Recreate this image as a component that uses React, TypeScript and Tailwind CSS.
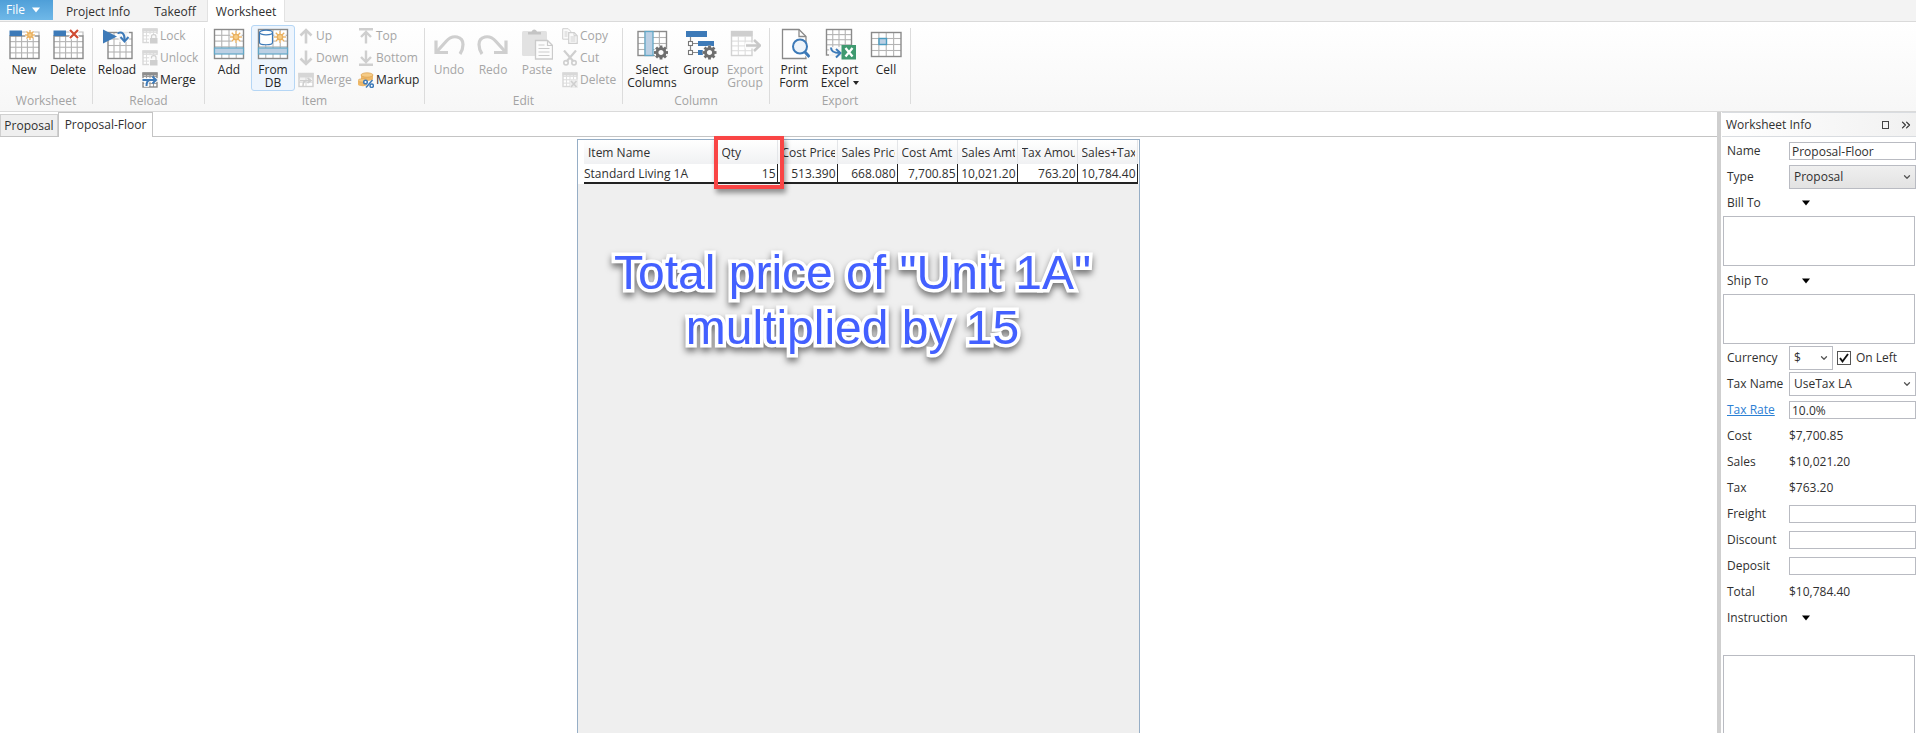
import React, { useState } from 'react';
import { ChevronDown, ChevronsRight } from 'lucide-react';

const BLUE = '#3d7ab8';
const LINE = '#8a8a8a';
const OFF = '#cfcfcf';

// Shared icon parts

function Svg({ size = 32, children }: { size?: number; children: React.ReactNode }) {
  return (
    <svg width={size} height={size} viewBox={`0 0 ${size} ${size}`} fill="none" aria-hidden="true" className="shrink-0">
      {children}
    </svg>
  );
}

function Grid({
  x, y, w, h, cols, rows, stroke = LINE, inner = '#b4b4b4', strokeWidth = 1.4,
}: {
  x: number; y: number; w: number; h: number; cols: number; rows: number;
  stroke?: string; inner?: string; strokeWidth?: number;
}) {
  const cw = w / cols;
  const rh = h / rows;
  return (
    <g>
      <rect x={x} y={y} width={w} height={h} fill="#fff" />
      <g stroke={inner} strokeWidth="1.1">
        {Array.from({ length: cols - 1 }, (_, i) => (
          <path key={`c${i}`} d={`M${x + cw * (i + 1)} ${y}v${h}`} />
        ))}
        {Array.from({ length: rows - 1 }, (_, i) => (
          <path key={`r${i}`} d={`M${x} ${y + rh * (i + 1)}h${w}`} />
        ))}
      </g>
      <rect x={x} y={y} width={w} height={h} stroke={stroke} strokeWidth={strokeWidth} />
    </g>
  );
}

function Star({ cx, cy, r, bg = '#fff' }: { cx: number; cy: number; r: number; bg?: string }) {
  return (
    <g transform={`translate(${cx} ${cy})`} stroke="#e9b060" strokeWidth="1.3">
      <circle r={r} fill={bg} fillOpacity="0.85" stroke="none" />
      {[0, 45, 90, 135].map((a) => (
        <path key={a} d={`M0 ${-r}V${r}`} transform={`rotate(${a})`} />
      ))}
      <circle r={r * 0.45} fill="#f7cd85" />
    </g>
  );
}

function Gear({ cx, cy }: { cx: number; cy: number }) {
  return (
    <g transform={`translate(${cx} ${cy})`}>
      <circle r="7" fill="#fbfbfb" />
      {[0, 45, 90, 135].map((a) => (
        <path key={a} d="M0 -7V7" stroke="#6e6e6e" strokeWidth="2.8" transform={`rotate(${a})`} />
      ))}
      <circle r="4" fill="#fbfbfb" stroke="#6e6e6e" strokeWidth="2.8" />
    </g>
  );
}

// Large ribbon icons

const NewIcon = () => (
  <Svg>
    <path d="M14 4h17v4" stroke="#bdbdbd" strokeWidth="1.2" />
    <Grid x={2} y={8} w={29} h={22.5} cols={5} rows={4} />
    <rect x="1.5" y="2.5" width="12.5" height="5.5" fill={BLUE} />
    <Star cx={22} cy={7} r={5} />
  </Svg>
);

const DeleteIcon = () => (
  <Svg>
    <path d="M14 4h17v4" stroke="#bdbdbd" strokeWidth="1.2" />
    <Grid x={2} y={8} w={29} h={22.5} cols={5} rows={4} />
    <rect x="1.5" y="2.5" width="12.5" height="5.5" fill={BLUE} />
    <path d="M18 2l8 8M26 2l-8 8" stroke="#fff" strokeWidth="4" />
    <path d="M18 2l8 8M26 2l-8 8" stroke="#cf4a32" strokeWidth="2.2" />
  </Svg>
);

const ReloadIcon = () => (
  <Svg>
    <Grid x={7} y={4.5} w={24} h={26} cols={4} rows={4} />
    <path d="M16 1h12v13H18z" fill="#fcfcfc" fillOpacity="0.8" />
    <path d="M2 1.5l14 7-14 7z" fill={BLUE} />
    <path d="M16.5 5.5C21 3 24 6 23.5 12" stroke={BLUE} strokeWidth="2" />
    <path d="M19.500 9l4 4.500 4-4.500" stroke={BLUE} strokeWidth="2" />
  </Svg>
);

const AddIcon = () => (
  <Svg>
    <Grid x={1.5} y={1.5} w={29} h={29} cols={4} rows={5} />
    <rect x="1.5" y="20" width="29" height="6" fill="#bcd0e4" stroke="#62a7c6" strokeWidth="1.2" />
    <Star cx={23} cy={9} r={6} />
  </Svg>
);

const FromDbIcon = () => (
  <Svg>
    <Grid x={1.5} y={1.5} w={29} h={29} cols={4} rows={5} />
    <rect x="1.5" y="20" width="29" height="6" fill="#bcd0e4" stroke="#62a7c6" strokeWidth="1.2" />
    <path d="M2.500 4.500v10c0 3 13 3 13 0v-10" fill="#fff" stroke={BLUE} strokeWidth="1.2" />
    <ellipse cx="9" cy="4.5" rx="6.5" ry="2.3" fill="#fff" stroke={BLUE} strokeWidth="1.2" />
    <Star cx={23} cy={9} r={6} />
  </Svg>
);

const UndoIcon = () => (
  <Svg>
    <path d="M3 12.5v12h12" stroke={OFF} strokeWidth="3.2" />
    <path d="M3.500 24L13 13.500c7-8 17-5 17 3 0 4-1 6.500-3 9.500" stroke={OFF} strokeWidth="3.2" />
  </Svg>
);

const RedoIcon = () => (
  <Svg>
    <path d="M29 12.5v12H17" stroke={OFF} strokeWidth="3.2" />
    <path d="M28.500 24L19 13.500c-7-8-17-5-17 3 0 4 1 6.500 3 9.500" stroke={OFF} strokeWidth="3.2" />
  </Svg>
);

const PasteIcon = () => (
  <Svg>
    <rect x="1" y="3" width="25" height="25" rx="1.5" fill="#e2e2e2" />
    <path d="M7 6.500V4h3.500c.5-3.500 5-3.500 5.500 0H20v2.500z" fill="#c4c4c4" />
    <path d="M14.500 12.500h12l5 5v13.500h-17z" fill="#fcfcfc" stroke="#cbcbcb" strokeWidth="1.3" />
    <path d="M26.500 12.500v5h5M17.500 17h6M17.500 20.500h11M17.500 24h11M17.500 27.500h11" stroke="#cbcbcb" strokeWidth="1.2" />
  </Svg>
);

const SelectColumnsIcon = () => (
  <Svg>
    <Grid x={2} y={3.5} w={28.5} h={24} cols={4} rows={4} />
    <rect x="9" y="3.5" width="8" height="24" fill="#bcd0e4" stroke="#62a7c6" strokeWidth="1.3" />
    <Gear cx={25} cy={24.5} />
  </Svg>
);

const GroupIcon = () => (
  <Svg>
    <rect x="1" y="3" width="21" height="6" fill={BLUE} />
    <path d="M5.500 9v15.500M5.500 15.500H13M5.500 24.500H13" stroke={LINE} strokeWidth="1.2" />
    <rect x="3.5" y="13.5" width="4" height="4" fill="#fff" stroke="#777" strokeWidth="1.1" />
    <rect x="3.5" y="22.5" width="4" height="4" fill="#fff" stroke="#777" strokeWidth="1.1" />
    <rect x="13" y="13" width="16" height="5" fill={BLUE} />
    <rect x="13" y="22" width="6" height="5" fill={BLUE} />
    <Gear cx={24.5} cy={24.5} />
  </Svg>
);

const ExportGroupIcon = () => (
  <Svg>
    <Grid x={2.5} y={3.5} w={20.5} h={24} cols={3} rows={5} stroke="#d2d2d2" inner="#dedede" />
    <rect x="2" y="3" width="21.5" height="5" fill={OFF} />
    <path d="M16 17.500h13" stroke="#fbfbfb" strokeWidth="6" />
    <path d="M17 17.500h13M25 12l6 5.500-6 5.500" stroke="#c8c8c8" strokeWidth="2.6" />
  </Svg>
);

const PrintFormIcon = () => (
  <Svg>
    <path d="M4.500 1.500H21l7 7v22H4.500z" fill="#fff" stroke={LINE} strokeWidth="1.3" />
    <path d="M21 1.500v7h7" stroke={LINE} strokeWidth="1.3" />
    <path d="M26.500 23l5 6" stroke="#fff" strokeWidth="5" />
    <circle cx="22" cy="18.5" r="7" fill="#eef4fa" stroke={BLUE} strokeWidth="2" />
    <path d="M26.500 23.500l5 5.500" stroke={BLUE} strokeWidth="3" />
  </Svg>
);

const ExportExcelIcon = () => (
  <Svg>
    <Grid x={2.5} y={1.5} w={25} h={25.5} cols={4} rows={5} />
    <path d="M5 19h13v11H5z" fill="#fbfbfb" fillOpacity="0.9" />
    <path d="M7 19.500c0 4 3 5.500 8.500 5.500M12 21l4.500 4-4.500 4.500" stroke={BLUE} strokeWidth="2" />
    <rect x="17.5" y="17" width="14.5" height="14.5" fill="#3f9a70" />
    <path d="M21.500 20l7 8.500M28.500 20l-7 8.500" stroke="#fff" strokeWidth="2.3" />
  </Svg>
);

const CellIcon = () => (
  <Svg>
    <Grid x={1.5} y={4.5} w={29.5} h={24} cols={4} rows={4} />
    <rect x="9" y="10.5" width="7.5" height="6" fill="#bcd0e4" stroke="#4b9cc0" strokeWidth="1.4" />
  </Svg>
);

// Small ribbon icons

const SmallTable = ({ children }: { children?: React.ReactNode }) => (
  <Svg size={16}>
    <Grid x={1} y={1} w={14} h={13.5} cols={4} rows={4} stroke="#d8d8d8" inner="#dedede" />
    <rect x="0.5" y="0.5" width="15" height="3" fill="#d8d8d8" />
    {children}
  </Svg>
);

const LockIcon = () => (
  <SmallTable>
    <rect x="7" y="6" width="9" height="10" fill="#fafafa" />
    <rect x="8" y="10" width="7.5" height="5.5" fill={OFF} />
    <path d="M9.500 10V8.500c0-2.500 4.500-2.500 4.500 0V10" stroke={OFF} strokeWidth="1.2" />
  </SmallTable>
);

const UnlockIcon = () => (
  <SmallTable>
    <rect x="7" y="5" width="9" height="11" fill="#fafafa" />
    <rect x="8" y="10" width="7.5" height="5.5" fill={OFF} />
    <path d="M9.500 8.500V7.500c0-2.500 4.500-2.500 4.500 0V10" stroke={OFF} strokeWidth="1.2" />
  </SmallTable>
);

const MergeTableIcon = () => (
  <Svg size={16}>
    <Grid x={1} y={1} w={14} h={14} cols={4} rows={4} inner="#9c9c9c" />
    <rect x="0.5" y="0.5" width="15" height="3" fill="#8d8d8d" />
    <path d="M0 6h16v4H7v5H2v-5H0z" fill="#fff" fillOpacity="0.8" />
    <path d="M0.500 8h13M10.500 4.500l3.500 3.500-3.500 3.500M4.500 14c0-4 1-6 4-6" stroke={BLUE} strokeWidth="2" />
  </Svg>
);

const MergeOffIcon = () => (
  <Svg size={16}>
    <Grid x={1} y={1.5} w={14} h={13} cols={2} rows={3} stroke={OFF} inner="#dadada" />
    <rect x="0.5" y="1" width="15" height="4" fill="#d6d6d6" />
    <path d="M2 8.500h11M9.500 6l3.500 2.500-3.500 2.500M5 14c0-4 1-5.500 4-5.500" stroke={OFF} strokeWidth="1.6" />
  </Svg>
);

const UpIcon = () => (
  <Svg size={16}><path d="M8 15.500V2M2.500 7.500L8 2l5.500 5.500" stroke={OFF} strokeWidth="2.6" /></Svg>
);
const DownIcon = () => (
  <Svg size={16}><path d="M8 .5V14M2.500 8.500L8 14l5.500-5.500" stroke={OFF} strokeWidth="2.6" /></Svg>
);
const TopIcon = () => (
  <Svg size={16}><path d="M1 1.200h14M8 15.500V4M3 9l5-5 5 5" stroke={OFF} strokeWidth="2.4" /></Svg>
);
const BottomIcon = () => (
  <Svg size={16}><path d="M1 14.800h14M8 .5V12M3 7l5 5 5-5" stroke={OFF} strokeWidth="2.4" /></Svg>
);

const MarkupIcon = () => (
  <Svg size={16}>
    <path d="M3 3v4c0 2.500 12 2.500 12 0V3z" fill="#eeb868" />
    <ellipse cx="9" cy="3" rx="6" ry="2.2" fill="#f5cb86" stroke="#dca250" strokeWidth=".7" />
    <path d="M0 9v3.500c0 2 9 2.500 9 0V9z" fill="#eeb868" />
    <ellipse cx="5" cy="8.5" rx="5" ry="1.8" fill="#f5cb86" stroke="#dca250" strokeWidth=".7" />
    <path d="M14.500 8l-6.500 7.500" stroke={BLUE} strokeWidth="1.5" />
    <circle cx="7.5" cy="10" r="1.8" fill="#fff" stroke={BLUE} strokeWidth="1.5" />
    <circle cx="13.7" cy="13.7" r="1.7" fill="#fff" stroke={BLUE} strokeWidth="1.5" />
  </Svg>
);

const CopyIcon = () => (
  <Svg size={16}>
    <path d="M.7 .7h5.500l2.500 2.500v8h-8z" fill="#fbfbfb" stroke={OFF} />
    <path d="M2.500 4h3M2.500 6h3M2.500 8h3" stroke={OFF} />
    <path d="M6.700 4.700h5.500l3 3v7.600h-8.500z" fill="#fbfbfb" stroke={OFF} strokeWidth="1.2" />
    <path d="M12 4.700v3h3M8.500 9h5M8.500 11h5M8.500 13h5" stroke={OFF} />
  </Svg>
);

const CutIcon = () => (
  <Svg size={16}>
    <path d="M2 .5l9.500 11M14 .5L4.500 11.500" stroke={OFF} strokeWidth="2.2" />
    <circle cx="4" cy="12.8" r="2.2" stroke={OFF} strokeWidth="1.6" />
    <circle cx="12" cy="12.8" r="2.2" stroke={OFF} strokeWidth="1.6" />
  </Svg>
);

const DeleteRowIcon = () => (
  <SmallTable>
    <rect x="8" y="7.5" width="8" height="8.5" fill="#ededed" />
    <path d="M9 9l5.500 6M14.500 9L9 15" stroke={OFF} strokeWidth="1.6" />
  </SmallTable>
);

const Caret = () => (
  <svg width="10" height="6" viewBox="0 0 10 6" fill="currentColor" aria-hidden="true"><path d="M1 0.500h8L5 5.500z" /></svg>
);

// Ribbon building blocks

function RibbonGroup({ title, children }: { title: string; children: React.ReactNode }) {
  return (
    <div className="flex">
      <div className="flex flex-col px-0.5 pt-[3px]">
        <div className="flex h-[68px] items-start">{children}</div>
        <div className="text-center leading-4 text-[#a3a3a3]">{title}</div>
      </div>
      <div className="mt-1.5 h-[76px] w-px bg-[#dcdcdc]" />
    </div>
  );
}

function BigButton({
  icon: Icon, lines, disabled = false, active = false, caret = false, width = 'w-11',
}: {
  icon: React.ComponentType; lines: string[];
  disabled?: boolean; active?: boolean; caret?: boolean; width?: string;
}) {
  return (
    <button
      type="button"
      disabled={disabled}
      className={`flex h-[66px] flex-col items-center rounded-[3px] border pt-0.5 leading-[13px] ${width} ${
        active ? 'border-[#b5d6f5] bg-[#eef5fd]' : 'border-transparent'
      } ${disabled ? 'text-[#a6a6a6]' : 'text-[#262626]'}`}
    >
      <Icon />
      <span className="mt-[3px] flex flex-col whitespace-nowrap">
        {lines.map((line, i) => (
          <span key={line} className="flex items-center justify-center gap-1">
            {line}
            {caret && i === lines.length - 1 && (
              <svg width="6" height="4" viewBox="0 0 6 4" fill="currentColor"><path d="M0 0h6L3 4z" /></svg>
            )}
          </span>
        ))}
      </span>
    </button>
  );
}

function SmallButton({ icon: Icon, label, disabled = true }: {
  icon: React.ComponentType; label: string; disabled?: boolean;
}) {
  return (
    <button
      type="button"
      disabled={disabled}
      className={`flex h-[22px] items-center gap-0.5 px-[3px] whitespace-nowrap ${
        disabled ? 'text-[#a6a6a6]' : 'text-[#262626]'
      }`}
    >
      <Icon />
      {label}
    </button>
  );
}

function Ribbon() {
  return (
    <div className="flex h-[90px] border-b border-[#dadada] bg-linear-to-b from-white to-[#f7f7f7]">
      <RibbonGroup title="Worksheet">
        <BigButton icon={NewIcon} lines={['New']} />
        <BigButton icon={DeleteIcon} lines={['Delete']} />
      </RibbonGroup>
      <RibbonGroup title="Reload">
        <BigButton icon={ReloadIcon} lines={['Reload']} />
        <div className="flex w-[63px] flex-col">
          <SmallButton icon={LockIcon} label="Lock" />
          <SmallButton icon={UnlockIcon} label="Unlock" />
          <SmallButton icon={MergeTableIcon} label="Merge" disabled={false} />
        </div>
      </RibbonGroup>
      <RibbonGroup title="Item">
        <BigButton icon={AddIcon} lines={['Add']} />
        <BigButton icon={FromDbIcon} lines={['From', 'DB']} active />
        <div className="flex w-15 flex-col">
          <SmallButton icon={UpIcon} label="Up" />
          <SmallButton icon={DownIcon} label="Down" />
          <SmallButton icon={MergeOffIcon} label="Merge" />
        </div>
        <div className="flex w-[67px] flex-col">
          <SmallButton icon={TopIcon} label="Top" />
          <SmallButton icon={BottomIcon} label="Bottom" />
          <SmallButton icon={MarkupIcon} label="Markup" disabled={false} />
        </div>
      </RibbonGroup>
      <RibbonGroup title="Edit">
        <BigButton icon={UndoIcon} lines={['Undo']} disabled />
        <BigButton icon={RedoIcon} lines={['Redo']} disabled />
        <BigButton icon={PasteIcon} lines={['Paste']} disabled />
        <div className="flex w-[61px] flex-col">
          <SmallButton icon={CopyIcon} label="Copy" />
          <SmallButton icon={CutIcon} label="Cut" />
          <SmallButton icon={DeleteRowIcon} label="Delete" />
        </div>
      </RibbonGroup>
      <RibbonGroup title="Column">
        <BigButton icon={SelectColumnsIcon} lines={['Select', 'Columns']} width="w-[54px]" />
        <BigButton icon={GroupIcon} lines={['Group']} />
        <BigButton icon={ExportGroupIcon} lines={['Export', 'Group']} disabled />
      </RibbonGroup>
      <RibbonGroup title="Export">
        <BigButton icon={PrintFormIcon} lines={['Print', 'Form']} />
        <BigButton icon={ExportExcelIcon} lines={['Export', 'Excel']} width="w-12" caret />
        <BigButton icon={CellIcon} lines={['Cell']} />
      </RibbonGroup>
    </div>
  );
}

// Worksheet table

const columns = ['Item Name', 'Qty', 'Cost Price', 'Sales Price', 'Cost Amt', 'Sales Amt', 'Tax Amount', 'Sales+Tax'];
const rows = [['Standard Living 1A', '15', '513.390', '668.080', '7,700.85', '10,021.20', '763.20', '10,784.40']];

function WorksheetTable() {
  return (
    <table className="w-full table-fixed border-collapse">
      <thead>
        <tr className="h-6 bg-linear-to-b from-white to-[#f0f1f3]">
          {columns.map((col, i) => (
            <th
              key={col}
              scope="col"
              className={`border-r border-[#e4e6e9] pt-0.5 pr-0.5 pl-1 text-left font-normal ${i === 0 ? 'w-[133px]' : 'w-15'}`}
            >
              <div className="overflow-hidden whitespace-nowrap">{col}</div>
            </th>
          ))}
        </tr>
      </thead>
      <tbody>
        {rows.map((row) => (
          <tr key={row[0]} className="h-[19px] border-b-2 border-[#222] bg-white">
            {row.map((value, i) => (
              <td
                key={columns[i]}
                className={`p-0 leading-[17px] whitespace-nowrap ${
                  i === 0 ? '' : 'border-r border-[#222] pr-px text-right'
                }`}
              >
                {value}
              </td>
            ))}
          </tr>
        ))}
      </tbody>
    </table>
  );
}

// Worksheet info panel

function Row({ label, htmlFor, children }: { label: string; htmlFor?: string; children?: React.ReactNode }) {
  return (
    <div className="flex h-[26px] items-center pl-[5px]">
      {htmlFor ? (
        <label htmlFor={htmlFor} className="w-[62px] shrink-0 whitespace-nowrap">{label}</label>
      ) : (
        <span className="w-[62px] shrink-0 whitespace-nowrap">{label}</span>
      )}
      {children}
    </div>
  );
}

function TextField({ id, value = '' }: { id: string; value?: string }) {
  return (
    <input
      id={id}
      type="text"
      defaultValue={value}
      className="h-[18px] w-full min-w-0 border border-[#b9bbc2] bg-white px-0.5 outline-none"
    />
  );
}

function SelectField({ id, value, className }: { id: string; value: string; className: string }) {
  return (
    <div className={`relative h-6 ${className}`}>
      <select id={id} defaultValue={value} className="h-full w-full appearance-none border border-[#b9bbc2] pl-1 outline-none">
        <option>{value}</option>
      </select>
      <ChevronDown size={10} strokeWidth={3} className="pointer-events-none absolute top-[7px] right-1 text-[#555]" />
    </div>
  );
}

function ExpandButton({ label }: { label: string }) {
  return (
    <button type="button" aria-label={label} className="ml-3 text-black"><Caret /></button>
  );
}

function InfoPanel() {
  const [onLeft, setOnLeft] = useState(true);

  return (
    <aside className="flex w-[199px] shrink-0 flex-col border-l-4 border-[#cfcfcf] bg-white pl-px">
      <header className="flex h-[25px] items-center border-y border-[#d9dce0] bg-linear-to-r from-white to-[#f1f1f1] pr-[3px] pl-1">
        <h2 className="flex-1">Worksheet Info</h2>
        <button type="button" aria-label="Maximize" className="mr-2.5 h-2 w-[7px] border border-[#444]" />
        <button type="button" aria-label="Collapse"><ChevronsRight size={14} className="text-[#333]" /></button>
      </header>
      <div className="flex flex-1 flex-col pt-px">
        <Row label="Name" htmlFor="name"><TextField id="name" value="Proposal-Floor" /></Row>
        <Row label="Type" htmlFor="type">
          <SelectField id="type" value="Proposal" className="w-full bg-linear-to-b from-[#f0f0f0] to-[#e2e2e2]" />
        </Row>
        <Row label="Bill To" htmlFor="bill-to"><ExpandButton label="Choose bill to" /></Row>
        <textarea id="bill-to" className="mx-px mb-0.5 h-[50px] resize-none border border-[#b9bbc2] outline-none" />
        <Row label="Ship To" htmlFor="ship-to"><ExpandButton label="Choose ship to" /></Row>
        <textarea id="ship-to" className="mx-px mb-px h-[50px] resize-none border border-[#b9bbc2] outline-none" />
        <Row label="Currency" htmlFor="currency">
          <SelectField id="currency" value="$" className="w-11 bg-white" />
          <label className="ml-1 flex items-center gap-[5px]">
            <span className="relative flex h-3.5 w-3.5">
              <input
                type="checkbox"
                checked={onLeft}
                onChange={(e) => setOnLeft(e.target.checked)}
                className="h-3.5 w-3.5 appearance-none border border-[#555] bg-white"
              />
              {onLeft && (
                <svg width="14" height="14" viewBox="0 0 14 14" fill="none" className="pointer-events-none absolute inset-0">
                  <path d="M3 7l2.500 3.500L11 3" stroke="#111" strokeWidth="1.9" />
                </svg>
              )}
            </span>
            On Left
          </label>
        </Row>
        <Row label="Tax Name" htmlFor="tax-name">
          <SelectField id="tax-name" value="UseTax LA" className="w-full bg-white" />
        </Row>
        <div className="flex h-[26px] items-center pl-[5px]">
          <a href="#tax-rate" className="w-[62px] shrink-0 text-[#2b80d4] underline">Tax Rate</a>
          <input
            id="tax-rate"
            type="text"
            aria-label="Tax Rate"
            defaultValue="10.0%"
            className="h-[18px] w-full min-w-0 border border-[#b9bbc2] bg-white px-0.5 outline-none"
          />
        </div>
        <Row label="Cost">$7,700.85</Row>
        <Row label="Sales">$10,021.20</Row>
        <Row label="Tax">$763.20</Row>
        <Row label="Freight" htmlFor="freight"><TextField id="freight" /></Row>
        <Row label="Discount" htmlFor="discount"><TextField id="discount" /></Row>
        <Row label="Deposit" htmlFor="deposit"><TextField id="deposit" /></Row>
        <Row label="Total">$10,784.40</Row>
        <Row label="Instruction" htmlFor="instruction"><ExpandButton label="Choose instruction" /></Row>
        <textarea id="instruction" className="mx-px mt-6 min-h-16 flex-1 resize-none border border-b-0 border-[#b9bbc2] outline-none" />
      </div>
    </aside>
  );
}

export default function App() {
  return (
    <div className="flex min-h-screen flex-col bg-white font-['Open_Sans','Noto_Sans',sans-serif] text-[12px] leading-4 text-[#303030]">
      <nav className="flex h-[22px] items-stretch border-b border-[#dadada] bg-[#f3f3f3]">
        <button type="button" className="mb-px flex w-[53px] items-center gap-1.5 bg-linear-to-b from-[#4f9fd8] to-[#6fb8e8] pl-1.5 text-white">
          File <Caret />
        </button>
        <button type="button" className="w-[90px] pt-0.5">Project Info</button>
        <button type="button" className="w-16 pt-0.5">Takeoff</button>
        <button type="button" className="-mb-px w-[78px] border-x border-[#e2e2e2] bg-white pt-0.5">Worksheet</button>
      </nav>

      <Ribbon />

      <div className="flex flex-1">
        <main className="flex min-w-0 flex-1 flex-col">
          <div className="flex h-[25px] items-end border-b border-[#c4c4c4]">
            <button type="button" className="h-[22px] w-[58px] border border-b-0 border-[#d0d0d0] bg-[#efefef] whitespace-nowrap">Proposal</button>
            <button type="button" className="-mb-px h-[25px] w-[95px] border border-b-0 border-[#c4c4c4] bg-white whitespace-nowrap">Proposal-Floor</button>
          </div>

          <section className="relative mx-auto mt-0.5 w-[563px] flex-1 border border-b-0 border-[#96aec6] bg-[#efefef]">
            <div className="bg-white pr-0.5 pl-1.5">
              <WorksheetTable />
            </div>
            <div className="pointer-events-none absolute -top-1 left-[136px] h-[53px] w-[70px] border-4 border-[#f94545] shadow-[2px_4px_5px_rgba(0,0,0,0.4)]" />
            <p className="absolute top-[105px] right-3 left-0 text-center font-['Liberation_Sans',Arial,sans-serif] text-[48px] leading-[55px] whitespace-nowrap text-[#4360ff] drop-shadow-[0_4px_3px_rgba(0,0,0,0.5)] [-webkit-text-stroke:7px_white] [paint-order:stroke_fill]">
              Total price of "Unit 1A"
              <br />
              multiplied by 15
            </p>
          </section>
        </main>

        <InfoPanel />
      </div>
    </div>
  );
}
